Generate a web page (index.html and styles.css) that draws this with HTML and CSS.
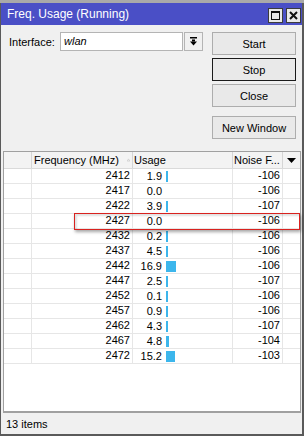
FILE: index.html
```html
<!DOCTYPE html>
<html>
<head>
<meta charset="utf-8">
<link rel="stylesheet" href="styles.css">
</head>
<body>
<div class="window">
  <div class="titlebar">
    <span class="title">Freq. Usage (Running)</span>
    <div class="tbtns">
      <span class="tbtn"><svg width="11" height="11" viewBox="0 0 11 11"><rect x="1.5" y="1.5" width="8" height="8" fill="none" stroke="#111" stroke-width="1"/><rect x="1" y="1" width="9" height="2" fill="#111"/></svg></span>
      <span class="tbtn"><svg width="11" height="11" viewBox="0 0 11 11"><path d="M2 2 L9 9 M9 2 L2 9" stroke="#111" stroke-width="2"/></svg></span>
    </div>
  </div>
  <div class="content">
    <div class="top">
      <div class="form">
        <span class="label">Interface:</span>
        <span class="input">wlan</span>
        <span class="ddbtn"><svg width="7" height="9" viewBox="0 0 7 9"><rect x="0" y="0" width="7" height="1.5" fill="#000"/><rect x="2" y="2.5" width="3" height="2" fill="#000"/><polygon points="0,4.5 7,4.5 3.5,8.5" fill="#000"/></svg></span>
      </div>
      <div class="buttons">
        <div class="btn">Start</div>
        <div class="btn btn-default sp3">Stop</div>
        <div class="btn sp3">Close</div>
        <div class="btn sp9">New Window</div>
      </div>
    </div>
    <div class="table">
      <div class="hrow">
        <div class="c0"></div>
        <div class="c1 h">Frequency (MHz)<svg class="sort" width="7" height="6" viewBox="0 0 7 6"><polygon points="3.5,0.5 6.5,5.5 0.5,5.5" fill="none" stroke="#b5b5b5" stroke-width="1"/></svg></div>
        <div class="c2 h">Usage</div>
        <div class="c3 h">Noise F...</div>
        <div class="c4 hd"><svg width="9" height="5" viewBox="0 0 9 5"><polygon points="0,0 9,0 4.5,5" fill="#000"/></svg></div>
      </div>
      <div class="row"><div class="c0"></div><div class="c1">2412</div><div class="c2"><span class="num">1.9</span><span class="bar" style="width:2px"></span></div><div class="c3">-106</div><div class="c4"></div></div>
      <div class="row"><div class="c0"></div><div class="c1">2417</div><div class="c2"><span class="num">0.0</span></div><div class="c3">-106</div><div class="c4"></div></div>
      <div class="row"><div class="c0"></div><div class="c1">2422</div><div class="c2"><span class="num">3.9</span><span class="bar" style="width:2px"></span></div><div class="c3">-107</div><div class="c4"></div></div>
      <div class="row"><div class="c0"></div><div class="c1">2427</div><div class="c2"><span class="num">0.0</span></div><div class="c3">-106</div><div class="c4"></div></div>
      <div class="row"><div class="c0"></div><div class="c1">2432</div><div class="c2"><span class="num">0.2</span><span class="bar" style="width:2px"></span></div><div class="c3">-106</div><div class="c4"></div></div>
      <div class="row"><div class="c0"></div><div class="c1">2437</div><div class="c2"><span class="num">4.5</span><span class="bar" style="width:2px"></span></div><div class="c3">-106</div><div class="c4"></div></div>
      <div class="row"><div class="c0"></div><div class="c1">2442</div><div class="c2"><span class="num">16.9</span><span class="bar" style="width:10px"></span></div><div class="c3">-106</div><div class="c4"></div></div>
      <div class="row"><div class="c0"></div><div class="c1">2447</div><div class="c2"><span class="num">2.5</span><span class="bar" style="width:2px"></span></div><div class="c3">-107</div><div class="c4"></div></div>
      <div class="row"><div class="c0"></div><div class="c1">2452</div><div class="c2"><span class="num">0.1</span><span class="bar" style="width:2px"></span></div><div class="c3">-106</div><div class="c4"></div></div>
      <div class="row"><div class="c0"></div><div class="c1">2457</div><div class="c2"><span class="num">0.9</span><span class="bar" style="width:2px"></span></div><div class="c3">-106</div><div class="c4"></div></div>
      <div class="row"><div class="c0"></div><div class="c1">2462</div><div class="c2"><span class="num">4.3</span><span class="bar" style="width:2px"></span></div><div class="c3">-107</div><div class="c4"></div></div>
      <div class="row"><div class="c0"></div><div class="c1">2467</div><div class="c2"><span class="num">4.8</span><span class="bar" style="width:3px"></span></div><div class="c3">-104</div><div class="c4"></div></div>
      <div class="row"><div class="c0"></div><div class="c1">2472</div><div class="c2"><span class="num">15.2</span><span class="bar" style="width:9px"></span></div><div class="c3">-103</div><div class="c4"></div></div>
      <div class="filler"></div>
      <div class="dragbox"></div>
    </div>
    <div class="status">13 items</div>
  </div>
</div>
</body>
</html>
```
FILE: styles.css
```css
* { box-sizing: border-box; }
html, body { margin: 0; padding: 0; }
body {
  background: #a9a9a9;
  font-family: "Liberation Sans", Arial, sans-serif;
  font-size: 11px;
  color: #000;
  width: 304px;
  height: 436px;
  overflow: hidden;
  padding-top: 3px;
}
.window {
  width: 304px;
  height: 433px;
  border-left: 1px solid #5a5a5a;
  border-right: 2px solid #5a5a5a;
  border-bottom: 2px solid #5a5a5a;
  background: #f0f0f0;
  display: flex;
  flex-direction: column;
}
.titlebar {
  height: 22px;
  flex: none;
  background: #4a4fc6;
  display: flex;
  align-items: flex-start;
  padding-left: 6px;
  color: #fff;
  font-size: 12px;
}
.title { flex: 1; line-height: 22px; }
.tbtns { display: flex; gap: 3px; margin-top: 5px; margin-right: 1px; }
.tbtn {
  width: 15px;
  height: 15px;
  background: #e9e9e9;
  border: 1px solid #3c3c3c;
  display: flex;
  align-items: center;
  justify-content: center;
}
.content {
  flex: 1;
  display: flex;
  flex-direction: column;
  padding-left: 2px;
}
.top { display: flex; padding-top: 7px; flex: none; }
.form { display: flex; align-items: center; height: 19px; width: 200px; flex: none; }
.label { width: 57px; padding-left: 6px; flex: none; }
.input {
  width: 123px;
  height: 19px;
  background: #fff;
  border: 1px solid #b4b4b4;
  font-style: italic;
  padding-left: 3px;
  line-height: 17px;
  flex: none;
}
.ddbtn {
  width: 19px;
  height: 19px;
  background: #f0f0f0;
  border: 1px solid #b4b4b4;
  display: flex;
  align-items: center;
  justify-content: center;
  flex: none;
  margin-left: 1px;
}
.buttons { display: flex; flex-direction: column; width: 84px; margin-left: 9px; }
.btn {
  height: 23px;
  border: 1px solid #adadad;
  background: #e9e9e9;
  display: flex;
  align-items: center;
  justify-content: center;
}
.btn-default { border-color: #1a1a1a; }
.sp3 { margin-top: 3px; }
.sp9 { margin-top: 9px; }
.table {
  position: relative;
  margin-top: 12px;
  width: 298px;
  height: 262px;
  flex: none;
  border: 1px solid #a0a0a0;
  border-bottom: 2px solid #a0a0a0;
  background: #fff;
  display: flex;
  flex-direction: column;
}
.hrow {
  display: flex;
  height: 17px;
  flex: none;
  background: #f3f3f3;
  border-bottom: 1px solid #dadada;
}
.row {
  display: flex;
  height: 15px;
  flex: none;
  border-bottom: 1px solid #e6e6e6;
  line-height: 13px;
}
.c0, .c1, .c2, .c3 { border-right: 1px solid #e6e6e6; }
.hrow .c0, .hrow .c1, .hrow .c2, .hrow .c3 { border-right-color: #d5d5d5; }
.c0 { width: 28px; }
.c1 { width: 101px; text-align: right; padding-right: 2px; }
.c2 { width: 100px; display: flex; align-items: center; }
.c3 { width: 50px; text-align: right; padding-right: 2px; }
.c4 { width: 17px; }
.hrow .h { text-align: left; line-height: 16px; white-space: nowrap; }
.hrow .c1 { padding-left: 2px; display: flex; align-items: center; }
.hrow .c2 { padding-left: 1px; }
.hrow .c3 { padding-left: 1px; }
.hd { display: flex; align-items: center; justify-content: center; padding-top: 1px; }
.sort { margin-left: 8px; }
.num { width: 29px; text-align: right; flex: none; }
.bar { height: 11px; background: #3cb6ec; margin-left: 4px; flex: none; }
.filler { flex: 1; }
.dragbox {
  position: absolute;
  left: 70px;
  top: 61px;
  width: 226px;
  height: 17px;
  border: 1px solid #d9221f;
  box-shadow: 1px 2px 3px rgba(0,0,0,0.35), inset 2px 2px 2px rgba(0,0,0,0.12);
}
.status {
  flex: 1;
  display: flex;
  align-items: center;
  padding-left: 3px;
}
```
